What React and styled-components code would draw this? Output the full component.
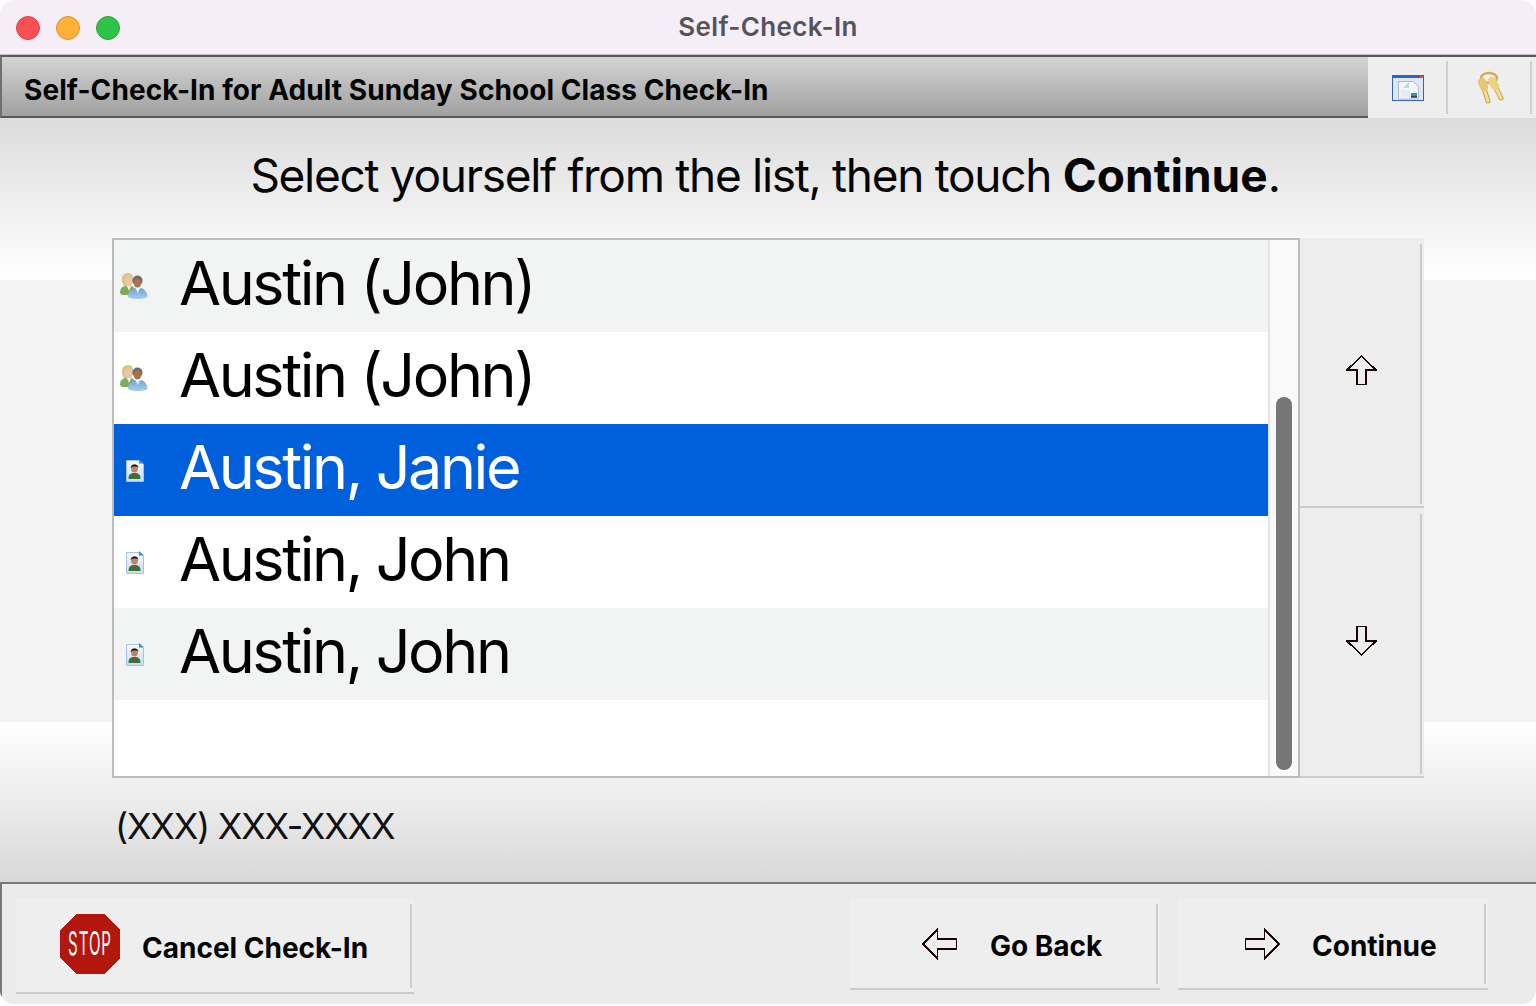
import styled, { createGlobalStyle } from "styled-components";

const rows = [
  { name: "Austin (John)", kind: "family", tint: true },
  { name: "Austin (John)", kind: "family" },
  { name: "Austin, Janie", kind: "person", selected: true },
  { name: "Austin, John", kind: "person" },
  { name: "Austin, John", kind: "person", tint: true },
];

export default function App() {
  return (
    <Page>
      <GlobalStyle />
      <Window>
        <TitleBar>
          <Lights>
            <Light $color="#fb5053" $edge="#e0443f" />
            <Light $color="#feb135" $edge="#dd9430" />
            <Light $color="#2ec246" $edge="#2aa83d" />
          </Lights>
          <TitleText>Self-Check-In</TitleText>
        </TitleBar>
        <Header>
          <HeaderTitle>Self-Check-In for Adult Sunday School Class Check-In</HeaderTitle>
          <ToolBox>
            <ToolButton $width={80} $inset={1}><WindowIcon /></ToolButton>
            <ToolButton $width={84} $inset={3}><KeysIcon /></ToolButton>
          </ToolBox>
        </Header>
        <Main>
          <Prompt>
            Select yourself from the list, then touch <b>Continue</b>.
          </Prompt>
          <ListArea>
            <List>
              <Rows>
                {rows.map((row, index) => (
                  <Row key={index} $tint={row.tint} $selected={row.selected}>
                    <RowIcon $inset={row.kind === "family" ? 6 : 12}>
                      {row.kind === "family" ? <FamilyIcon /> : <PersonIcon />}
                    </RowIcon>
                    <RowName>{row.name}</RowName>
                  </Row>
                ))}
              </Rows>
              <Track>
                <Thumb />
              </Track>
            </List>
            <ArrowColumn>
              <ArrowButton><UpArrow /></ArrowButton>
              <ArrowButton><DownArrow /></ArrowButton>
            </ArrowColumn>
          </ListArea>
          <Phone>(XXX) XXX-XXXX</Phone>
        </Main>
        <Footer>
          <CancelButton>
            <StopSign />
            <Label>Cancel Check-In</Label>
          </CancelButton>
          <NavButtons>
            <NavButton $inset={72}><LeftArrow /><Label>Go Back</Label></NavButton>
            <NavButton $inset={66}><RightArrow /><Label>Continue</Label></NavButton>
          </NavButtons>
        </Footer>
      </Window>
    </Page>
  );
}

function UpArrow() {
  return (
    <svg width="31" height="31" viewBox="0 0 31 31" shapeRendering="crispEdges">
      <path d="M15.5 1 L30 15 H20 V29.5 H11 V15 H1 Z" fill="none" stroke="#1a0505" strokeWidth="1.6" />
    </svg>
  );
}

function DownArrow() {
  return (
    <svg width="31" height="31" viewBox="0 0 31 31" shapeRendering="crispEdges">
      <path d="M15.5 30 L30 16 H20 V1.5 H11 V16 H1 Z" fill="none" stroke="#1a0505" strokeWidth="1.6" />
    </svg>
  );
}

function LeftArrow() {
  return (
    <svg width="36" height="32" viewBox="0 0 36 32" shapeRendering="crispEdges">
      <path d="M1 16 L15.5 1.5 V11 H34.5 V21 H15.5 V30.5 Z" fill="none" stroke="#1a0505" strokeWidth="1.6" />
    </svg>
  );
}

function RightArrow() {
  return (
    <svg width="36" height="32" viewBox="0 0 36 32" shapeRendering="crispEdges">
      <path d="M35 16 L20.5 1.5 V11 H1.5 V21 H20.5 V30.5 Z" fill="none" stroke="#1a0505" strokeWidth="1.6" />
    </svg>
  );
}

function StopSign() {
  return (
    <StopSvg width="60" height="60" viewBox="0 0 60 60" shapeRendering="crispEdges">
      <path d="M16 0 H44 L60 16 V44 L44 60 H16 L0 44 V16 Z" fill="#b2160c" />
      <text
        transform="translate(30 41) scale(0.47 1)"
        textAnchor="middle"
        fontFamily="Inter, sans-serif"
        fontWeight="400"
        fontSize="32"
        letterSpacing="2"
        fill="#ffffff"
      >
        STOP
      </text>
    </StopSvg>
  );
}

function FamilyIcon() {
  return (
    <svg width="28" height="26" viewBox="0 0 28 26">
      <defs>
        <linearGradient id="shirtBlue" x1="0" y1="0" x2="0" y2="1">
          <stop offset="0" stopColor="#6fa3d4" />
          <stop offset="1" stopColor="#a9cdea" />
        </linearGradient>
      </defs>
      <path d="M2 9 C1 3 4 0 8 0 C12 0 14 3 13 9 L11 13 H4 Z" fill="#d9c48c" />
      <ellipse cx="8.5" cy="7.5" rx="4" ry="4.8" fill="#ecc4a6" />
      <path d="M0 20 C0 15 3 13 6 13 L9 15 L12 13 C14 14 15 17 15 20 L12 22 H2 Z" fill="#7faa5c" />
      <path d="M7 13 L9 18 L11 13 Z" fill="#eef2e6" />
      <circle cx="17.5" cy="7.5" r="5" fill="#6a6a6a" />
      <ellipse cx="17.5" cy="10" rx="3.8" ry="4.6" fill="#a9714e" />
      <path d="M8 24 C8 18 12 15.5 15 15 L18 17 L21 15 C25 16 27.5 20 27.5 24 C24 26.5 12 27 8 24 Z" fill="url(#shirtBlue)" />
      <path d="M15.5 15 L17.8 20 L20 15 Z" fill="#eef4fa" />
    </svg>
  );
}

function PersonIcon() {
  return (
    <svg width="18" height="23" viewBox="0 0 18 23">
      <defs>
        <linearGradient id="docFill" x1="0" y1="0" x2="0" y2="1">
          <stop offset="0" stopColor="#f6f9fd" />
          <stop offset="1" stopColor="#c6dbf6" />
        </linearGradient>
      </defs>
      <path d="M0.5 1.5 H13 L17.5 5 V22.5 H0.5 Z" fill="url(#docFill)" stroke="#a8c0e6" />
      <path d="M13 0 L18 4.5 H13 Z" fill="#2f8ae0" />
      <ellipse cx="8.5" cy="9.5" rx="3.4" ry="4" fill="#b98663" />
      <path d="M4.8 9 C4 4.5 12.5 4 12.4 8.6 L11 7.4 H6.4 Z" fill="#1e130c" />
      <path d="M2.5 20 C2.5 15.5 4.5 14 8.5 14 C12.5 14 14.5 15.5 14.5 20 Z" fill="#2d7a36" />
      <path d="M7.4 14 H9.6 L10 17.5 L8.5 19.5 L7 17.5 Z" fill="#b43434" />
    </svg>
  );
}

function WindowIcon() {
  return (
    <svg width="32" height="26" viewBox="0 0 32 26">
      <rect x="0.5" y="0.5" width="31" height="25" fill="#dce8f8" stroke="#3a62b8" />
      <rect x="0" y="0" width="32" height="3" fill="#2f64c6" />
      <rect x="28" y="1" width="3" height="1.5" fill="#e06040" />
      <path d="M6.5 6.5 H21 L26.5 11 V24 H6.5 Z" fill="#f2f5fa" stroke="#aeb8c8" />
      <path d="M11 13 L17 7 V13 Z" fill="#c4d3ea" />
      <path d="M9 15 H18 V22 H9 Z" fill="#e6eaf1" />
      <rect x="19" y="18" width="6" height="2.4" fill="#3f8f9f" />
      <rect x="19" y="20.4" width="6" height="2.4" fill="#24506e" />
    </svg>
  );
}

function KeysIcon() {
  return (
    <svg width="28" height="34" viewBox="0 0 28 34">
      <g fill="none" strokeLinecap="round">
        <ellipse cx="12" cy="7" rx="8" ry="5" stroke="#d3ac52" strokeWidth="2.4" />
        <path d="M6 14 L11 30" stroke="#c9a24a" strokeWidth="5" />
        <path d="M6 14 L11 30" stroke="#f3dd96" strokeWidth="3" />
        <path d="M17 13 L24 27" stroke="#c9a24a" strokeWidth="5" />
        <path d="M17 13 L24 27" stroke="#f3dd96" strokeWidth="3" />
        <path d="M5 11 L7 16" stroke="#e6c675" strokeWidth="8" />
        <path d="M15 10 L18 15" stroke="#ecd27f" strokeWidth="8" />
      </g>
    </svg>
  );
}

const GlobalStyle = createGlobalStyle`
  html, body {
    margin: 0;
    padding: 0;
    background: #ffffff;
  }
  * {
    box-sizing: border-box;
  }
`;

const Page = styled.div`
  width: 1536px;
  height: 1006px;
  font-family: Inter, "Liberation Sans", sans-serif;
  color: #000000;
`;

const Window = styled.div`
  width: 1536px;
  height: 1004px;
  display: flex;
  flex-direction: column;
  border-radius: 14px;
  overflow: hidden;
`;

const TitleBar = styled.div`
  position: relative;
  height: 55px;
  flex: none;
  display: flex;
  align-items: center;
  justify-content: center;
  padding-bottom: 2px;
  background: #f5eef6;
  border-bottom: 1px solid #c4c0c6;
`;

const Lights = styled.div`
  position: absolute;
  left: 16px;
  top: 16px;
  display: flex;
  gap: 16px;
`;

const Light = styled.span`
  width: 24px;
  height: 24px;
  border-radius: 50%;
  background: ${(props) => props.$color};
  border: 1px solid ${(props) => props.$edge};
`;

const TitleText = styled.div`
  font-size: 26px;
  font-weight: 600;
  letter-spacing: 0.35px;
  color: #55525a;
`;

const Header = styled.div`
  height: 63px;
  flex: none;
  display: flex;
`;

const HeaderTitle = styled.div`
  flex: 1;
  display: flex;
  align-items: center;
  padding: 7px 0 0 22px;
  font-size: 28px;
  font-weight: 700;
  letter-spacing: 0.07px;
  color: #050505;
  background: linear-gradient(#d4d4d4, #a0a0a0);
  border: 2px solid #585858;
  border-right: none;
  border-left-color: #707070;
`;

const ToolBox = styled.div`
  width: 168px;
  flex: none;
  display: flex;
  padding: 4px 4px 4px 0;
  background: #eeeeee;
  border-top: 2px solid #585858;
`;

const ToolButton = styled.div`
  width: ${(props) => props.$width}px;
  display: flex;
  align-items: center;
  justify-content: center;
  padding-left: ${(props) => props.$inset}px;
  border-right: 2px solid #d0d0d0;
`;

const Main = styled.div`
  flex: 1;
  display: flex;
  flex-direction: column;
  background: linear-gradient(
    #dcdcdc 0,
    #ffffff 162px,
    #f4f4f4 162px,
    #f4f4f4 604px,
    #ffffff 604px,
    #d8d8d8 764px
  );
`;

const Prompt = styled.div`
  height: 120px;
  flex: none;
  display: flex;
  align-items: center;
  justify-content: center;
  white-space: pre-wrap;
  padding: 0 6px 6px 0;
  font-size: 46px;
  font-weight: 400;
  letter-spacing: -1.3px;
  color: #050505;

  b {
    font-weight: 700;
    letter-spacing: 0;
  }
`;

const ListArea = styled.div`
  display: flex;
  height: 540px;
  margin: 0 112px;
`;

const List = styled.div`
  width: 1188px;
  flex: none;
  display: flex;
  background: #ffffff;
  border: 2px solid #bcbcbc;
`;

const Rows = styled.div`
  flex: 1;
`;

const Row = styled.div`
  height: 92px;
  display: flex;
  align-items: center;
  color: ${(props) => (props.$selected ? "#ffffff" : "#000000")};
  background: ${(props) => {
    if (props.$selected) return "#0060dc";
    return props.$tint ? "#f2f4f3" : "#ffffff";
  }};
`;

const RowIcon = styled.span`
  width: 65px;
  flex: none;
  display: flex;
  align-items: center;
  padding-left: ${(props) => props.$inset}px;
`;

const RowName = styled.span`
  margin-top: -6px;
  font-size: 61px;
  font-weight: 400;
  letter-spacing: -2.4px;
`;

const Track = styled.div`
  position: relative;
  width: 30px;
  flex: none;
  background: #f9f9f9;
  border-left: 2px solid #e4e4e4;
`;

const Thumb = styled.div`
  position: absolute;
  left: 6px;
  top: 157px;
  width: 16px;
  height: 373px;
  border-radius: 8px;
  background: #757575;
`;

const ArrowColumn = styled.div`
  flex: 1;
  display: flex;
  flex-direction: column;
`;

const ArrowButton = styled.div`
  position: relative;
  height: 270px;
  display: flex;
  align-items: center;
  justify-content: center;
  padding: 0 2px 3px 0;
  background: #ededed;
  border-bottom: 2px solid #cccccc;

  &::after {
    content: "";
    position: absolute;
    right: 2px;
    top: 6px;
    bottom: 2px;
    width: 2px;
    background: #cccccc;
  }
`;

const Phone = styled.div`
  margin: 26px 0 0 115px;
  font-size: 36px;
  line-height: 44px;
  letter-spacing: -1.2px;
  color: #111111;
`;

const Footer = styled.div`
  height: 122px;
  flex: none;
  display: flex;
  justify-content: space-between;
  padding: 14px 48px 0 14px;
  background: #ebebeb;
  border-top: 2px solid #777777;
  border-left: 2px solid #777777;
`;

const BaseButton = styled.div`
  position: relative;
  display: flex;
  align-items: center;
  color: #050505;
  background: #eeeeee;
  border-bottom: 2px solid #cccccc;

  &::after {
    content: "";
    position: absolute;
    right: 2px;
    top: 6px;
    bottom: 4px;
    width: 2px;
    background: #cccccc;
  }
`;

const Label = styled.span`
  margin-top: 6px;
  font-size: 28px;
  font-weight: 700;
`;

const CancelButton = styled(BaseButton)`
  width: 398px;
  height: 96px;
  padding-left: 44px;
`;

const StopSvg = styled.svg`
  flex: none;
  margin: -2px 22px 0 0;
`;

const NavButtons = styled.div`
  display: flex;
  gap: 18px;
`;

const NavButton = styled(BaseButton)`
  width: 310px;
  height: 92px;
  padding-left: ${(props) => props.$inset}px;

  svg {
    margin: 2px 32px 0 0;
  }
`;
